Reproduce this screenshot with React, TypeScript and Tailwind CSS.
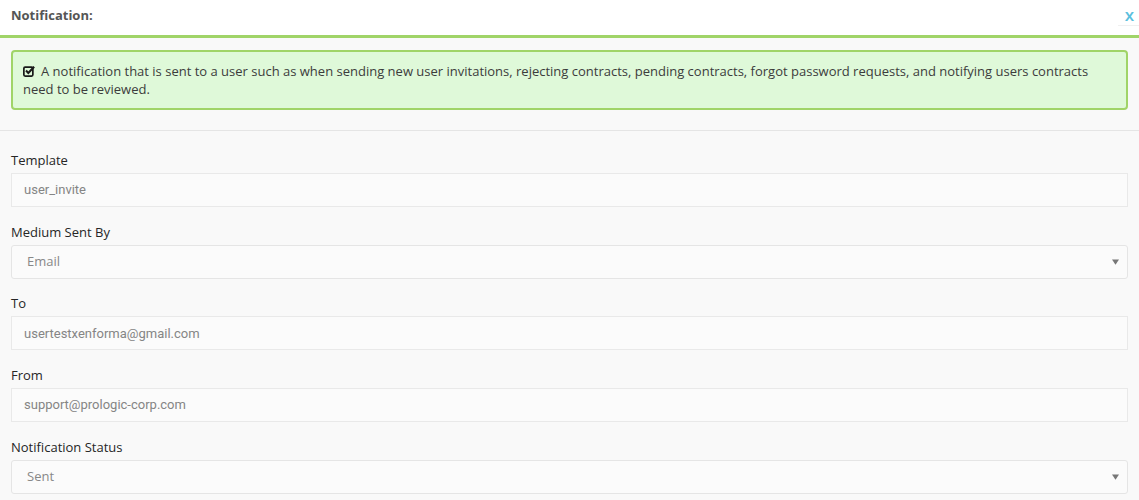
const fields = [
  { label: "Template", value: "user_invite", type: "input" },
  { label: "Medium Sent By", value: "Email", type: "select" },
  { label: "To", value: "usertestxenforma@gmail.com", type: "input" },
  { label: "From", value: "support@prologic-corp.com", type: "input" },
  { label: "Notification Status", value: "Sent", type: "select" },
];

const CheckSquare = () => (
  <svg viewBox="0 0 14 14" className="w-[12px] h-[12px] inline-block mr-[6px] -mt-[3px]">
    <rect x="1" y="2.5" width="10.5" height="10.5" rx="1.5" fill="none" stroke="#1a1a1a" strokeWidth="2" />
    <path d="M3.5 6.5 L6.2 9.3 L13 2" fill="none" stroke="#1a1a1a" strokeWidth="2.4" />
  </svg>
);

const App = () => {
  return (
    <div className="w-[1139px] h-[500px] overflow-hidden bg-[#f9f9f9] font-['Open_Sans',sans-serif]">
      {/* Header */}
      <div className="h-[38px] bg-white border-b-[3px] border-[#a0d468] flex items-start justify-between pl-[11px]">
        <h4 className="text-[13px] font-bold text-[#555] leading-[18px] pt-[6px]">Notification:</h4>
        <button className="text-[#5bc0de] text-[17px] font-semibold leading-[18px] pt-[6px] pb-[1px] border-b border-[#f0f0f0] w-[21px] text-right pr-[5px]">
          x
        </button>
      </div>

      {/* Description */}
      <div className="px-[11px] pt-[12px] pb-[20px] border-b border-[#e5e5e5]">
        <div className="bg-[#dff9d9] border-2 border-[#a0d468] rounded-[4px] px-[10px] py-[10px] text-[13px] leading-[18px] text-[#3c3c3c]">
          <CheckSquare />
          A notification that is sent to a user such as when sending new user invitations, rejecting contracts, pending contracts, forgot password requests, and notifying users contracts need to be reviewed.
        </div>
      </div>

      {/* Form */}
      <div className="px-[11px] pt-[20px]">
        {fields.map((field) => (
          <div key={field.label} className="mb-[15.7px]">
            <label className="block text-[13px] leading-[18px] text-[#262626] mb-[4px]">{field.label}</label>
            {field.type === "input" ? (
              <div className="h-[34px] bg-[#fbfbfb] border border-[#e9e9e9] flex items-center px-[12px] text-[13px] text-[#858585] font-['Roboto',sans-serif]">
                {field.value}
              </div>
            ) : (
              <div className="h-[34px] bg-[#fbfbfb] border border-[#e5e5e5] rounded-[3px] flex items-center justify-between pl-[15px] pr-[8px] text-[13px] text-[#888]">
                <span>{field.value}</span>
                <svg viewBox="0 0 8 6" className="w-[7px] h-[6px]">
                  <path d="M0 0 H8 L4 6 Z" fill="#777" />
                </svg>
              </div>
            )}
          </div>
        ))}
      </div>
    </div>
  );
};

export default App;
